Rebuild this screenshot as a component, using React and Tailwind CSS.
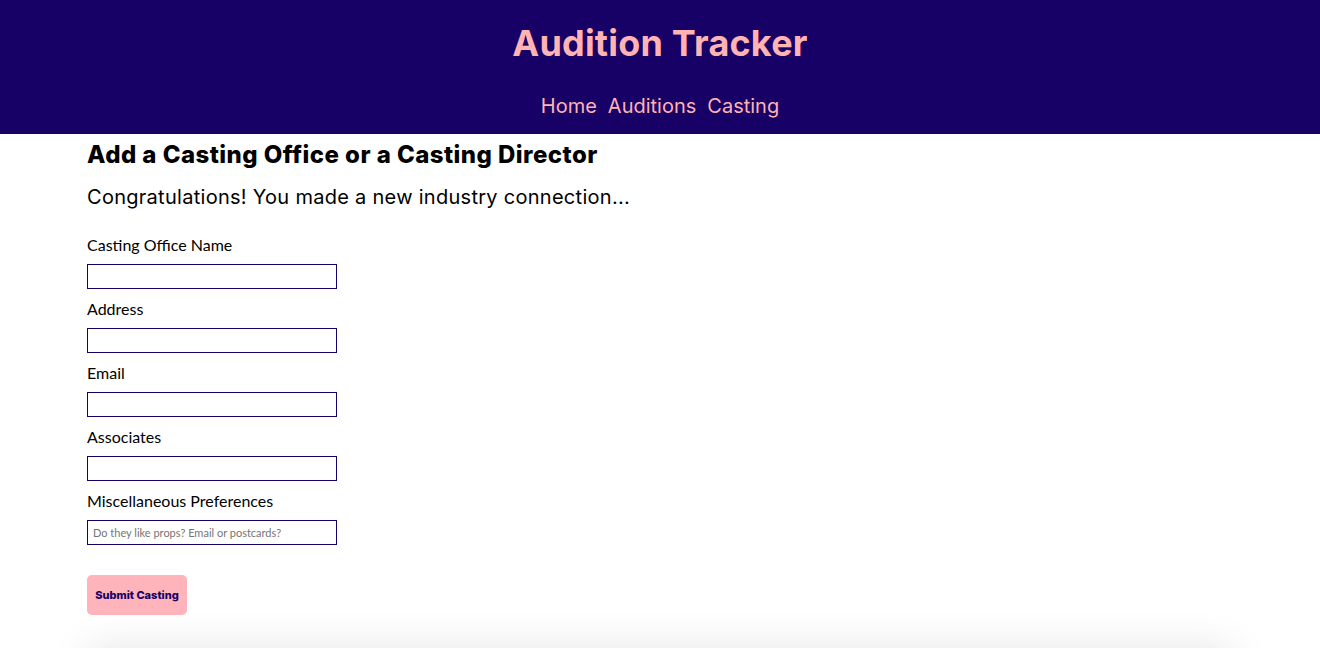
import React from "react";

const fields = [
  { label: "Casting Office Name" },
  { label: "Address" },
  { label: "Email" },
  { label: "Associates" },
  { label: "Miscellaneous Preferences", placeholder: "Do they like props? Email or postcards?" },
];

export default function App() {
  const work = { fontFamily: "Inter, 'Open Sans', sans-serif" };
  return (
    <div className="min-h-[648px] bg-white overflow-hidden">
      <header className="bg-[#170066] h-[134px] flex flex-col items-center" style={work}>
        <h1 className="pt-[21px] text-[36px] leading-[44px] font-bold tracking-[0.2px] text-[#ffb3b3]">Audition Tracker</h1>
        <nav className="mt-[29px] flex gap-[11px] text-[20px] leading-[24px] text-[#ffb3b3]">
          <a>Home</a>
          <a>Auditions</a>
          <a>Casting</a>
        </nav>
      </header>
      <main className="w-[1146px] mx-auto">
        <h2 className="mt-[6px] text-[24px] leading-[29px] font-extrabold tracking-[0.45px] text-black" style={work}>
          Add a Casting Office or a Casting Director
        </h2>
        <p className="mt-[16px] text-[20px] leading-[24px] tracking-[0.28px] text-black" style={work}>
          Congratulations! You made a new industry connection...
        </p>
        <form className="mt-[26px] flex flex-col" style={{ fontFamily: "Lato, sans-serif" }}>
          {fields.map((f) => (
            <div key={f.label} className="flex flex-col mb-[10px]">
              <label className="text-[16px] leading-[20px] text-black">{f.label}</label>
              <input
                className="mt-[9px] w-[250px] h-[25px] border border-[#170066] px-[5px] text-[11px] placeholder:text-[#757575] outline-none"
                placeholder={f.placeholder || ""}
              />
            </div>
          ))}
          <button
            type="button"
            className="mt-[20px] w-[100px] h-[40px] rounded-[5px] bg-[#ffb3ba] text-[#170066] text-[11px] font-extrabold"
            style={work}
          >
            Submit Casting
          </button>
        </form>
        <div className="mt-[36px] h-[200px] bg-white shadow-[0_0_40px_rgba(0,0,0,0.12)]" />
      </main>
    </div>
  );
}
